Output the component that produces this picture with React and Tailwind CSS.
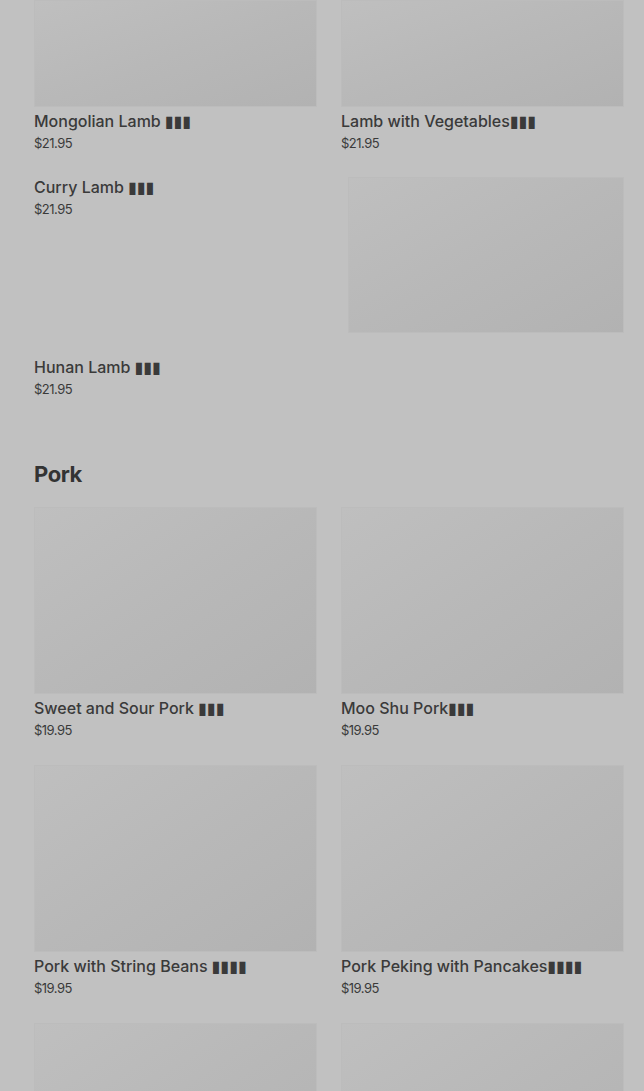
const lamb = [
  { name: "Mongolian Lamb ▮▮▮", price: "$21.95", cut: true },
  { name: "Lamb with Vegetables▮▮▮", price: "$21.95", cut: true },
  { name: "Curry Lamb ▮▮▮", price: "$21.95", noImage: true },
  { imageOnly: true },
  { name: "Hunan Lamb ▮▮▮", price: "$21.95", noImage: true },
];

const pork = [
  { name: "Sweet and Sour Pork ▮▮▮", price: "$19.95" },
  { name: "Moo Shu Pork▮▮▮", price: "$19.95" },
  { name: "Pork with String Beans ▮▮▮▮", price: "$19.95" },
  { name: "Pork Peking with Pancakes▮▮▮▮", price: "$19.95" },
  { photo: true },
  { photo: true },
];

function Placeholder({ className }) {
  return (
    <div
      className={`border border-[#bcbcbc] bg-gradient-to-br from-[#bfbfbf] via-[#b8b8b8] to-[#b2b2b2] ${className}`}
    />
  );
}

function Dish({ item }) {
  if (item.imageOnly) {
    return <Placeholder className="ml-[7px] h-[156px]" />;
  }
  if (item.photo) {
    return <Placeholder className="h-[187px]" />;
  }
  return (
    <div>
      {!item.noImage && <Placeholder className={item.cut ? "h-[107px]" : "h-[187px]"} />}
      <p className={`${item.noImage ? "-mt-[2px]" : "mt-[2px]"} text-[16px] font-medium leading-[24px] text-[#3a3a3a]`}>
        {item.name}
      </p>
      <p className="text-[13px] leading-[20px] tracking-[-0.04em] text-[#3a3a3a]">{item.price}</p>
    </div>
  );
}

export default function App() {
  return (
    <main
      className="h-[1091px] overflow-hidden bg-[#c1c1c1] pl-[34px] pr-[20px]"
      style={{ fontFamily: "Inter, 'Noto Sans', 'DejaVu Sans', sans-serif" }}
    >
      <section className="grid grid-cols-2 gap-x-6 gap-y-6">
        {lamb.map((item, i) => (
          <Dish key={i} item={item} />
        ))}
      </section>

      <h2 className="mt-[59px] mb-[17px] text-[22px] font-bold leading-[32px] tracking-[-0.02em] text-[#333]">
        Pork
      </h2>

      <section className="grid grid-cols-2 gap-x-6 gap-y-[25px]">
        {pork.map((item, i) => (
          <Dish key={i} item={item} />
        ))}
      </section>
    </main>
  );
}
